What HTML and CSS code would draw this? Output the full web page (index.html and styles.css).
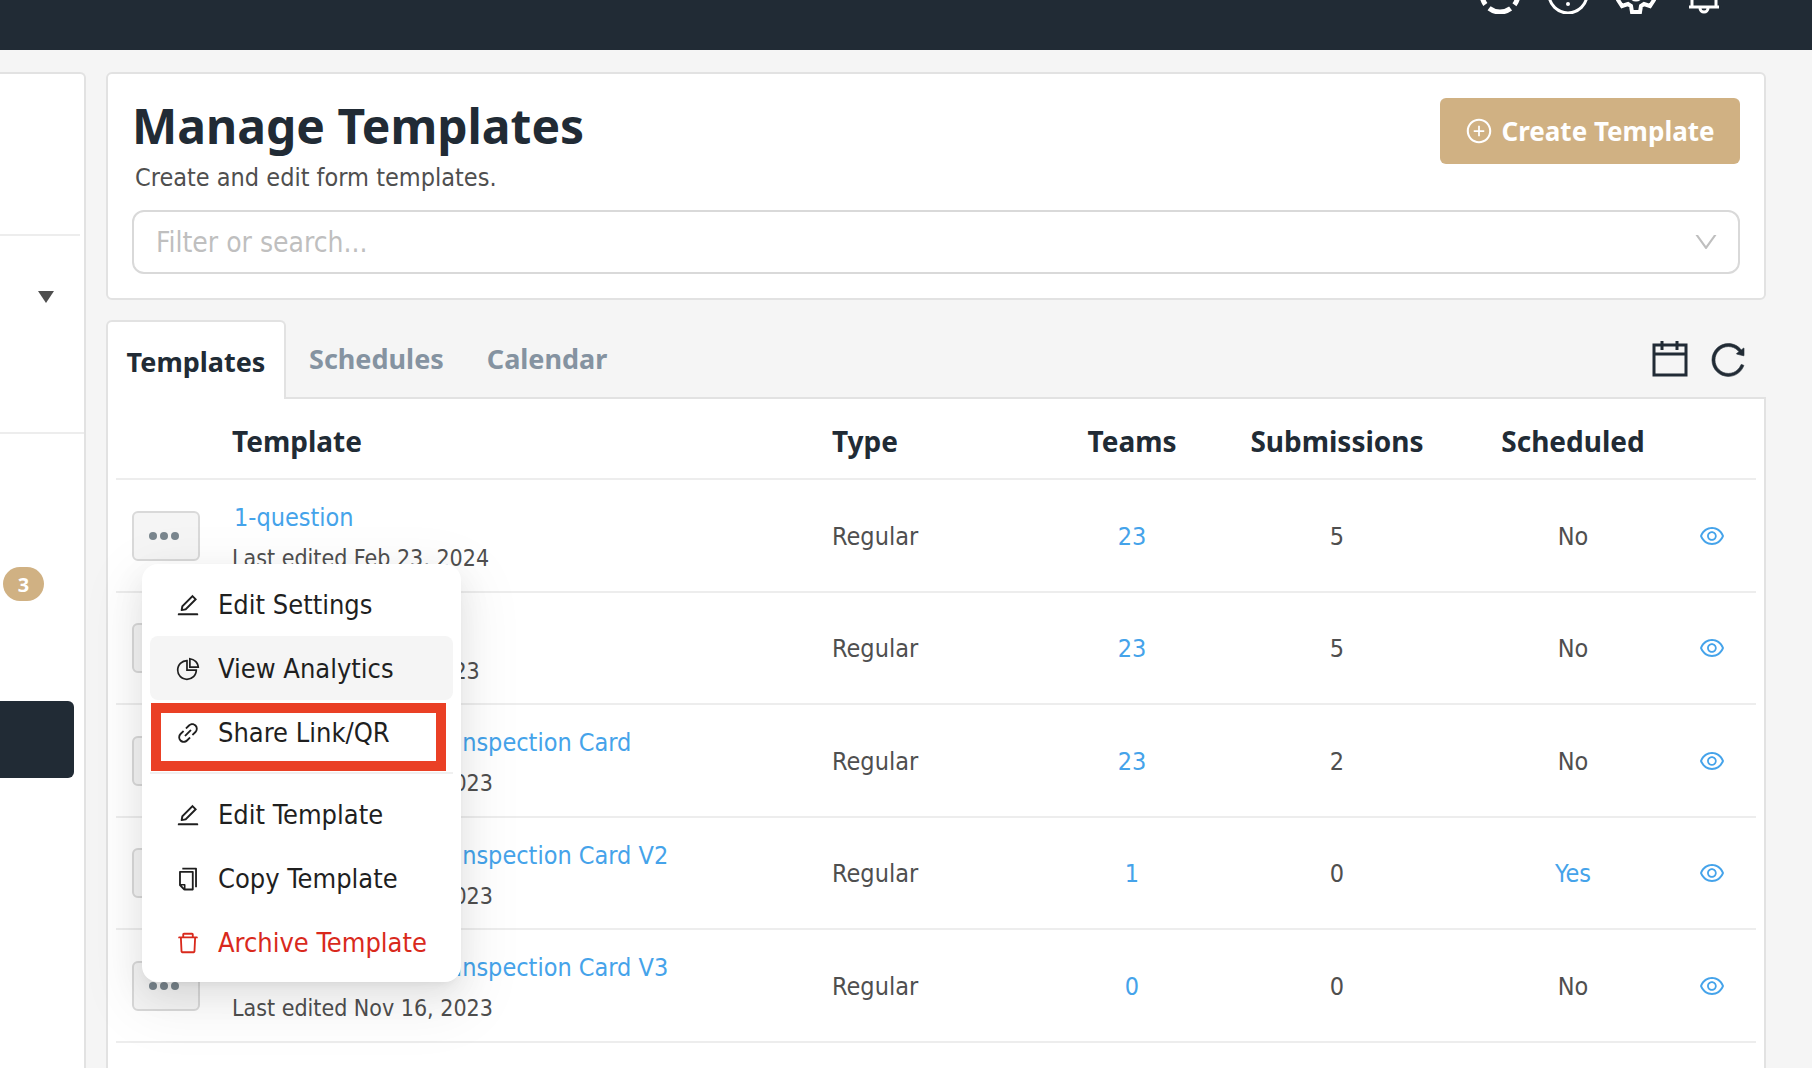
FILE: index.html
```html
<!DOCTYPE html>
<html lang="en">

<head>
    <meta charset="UTF-8">
    <title>Manage Templates</title>
    <link rel="stylesheet" href="styles.css">
</head>

<body>
    <!-- icon sprite -->
    <svg class="sprite" aria-hidden="true">
        <symbol id="icon-plus" viewBox="0 0 1024 1024">
            <path d="M696 480H544V328c0-4.400-3.600-8-8-8h-48c-4.400 0-8 3.600-8 8v152H328c-4.400 0-8 3.600-8 8v48c0 4.400 3.600 8 8 8h152v152c0 4.400 3.600 8 8 8h48c4.400 0 8-3.600 8-8V544h152c4.400 0 8-3.600 8-8v-48c0-4.400-3.600-8-8-8z" />
            <path d="M512 64C264.600 64 64 264.600 64 512s200.600 448 448 448 448-200.600 448-448S759.400 64 512 64zm0 820c-205.400 0-372-166.600-372-372s166.600-372 372-372 372 166.600 372 372-166.600 372-372 372z" />
        </symbol>
        <symbol id="icon-edit" viewBox="0 0 1024 1024">
            <path d="M257.700 752c2 0 4-.2 6-.5L431.900 722c2-.4 3.900-1.300 5.300-2.800l423.900-423.900a9.960 9.960 0 0 0 0-14.100L694.900 114.900c-1.900-1.900-4.400-2.900-7.100-2.900s-5.200 1-7.100 2.900L256.800 538.800c-1.500 1.500-2.400 3.300-2.800 5.300l-29.500 168.200a33.500 33.500 0 0 0 9.400 29.800c6.600 6.400 14.900 9.900 23.800 9.900zm67.400-174.400L687.800 215l73.300 73.300-362.700 362.600-88.900 15.700 15.600-89zM880 836H144c-17.700 0-32 14.300-32 32v36c0 4.400 3.600 8 8 8h784c4.400 0 8-3.600 8-8v-36c0-17.700-14.300-32-32-32z" />
        </symbol>
        <symbol id="icon-chart" viewBox="0 0 1024 1024">
            <path d="M864 518H506V160c0-4.400-3.600-8-8-8h-26a398.460 398.460 0 0 0-282.800 117.100 398.190 398.190 0 0 0-85.700 127.100A397.610 397.610 0 0 0 72 552a398.460 398.460 0 0 0 117.100 282.800c36.700 36.700 79.500 65.600 127.100 85.700A397.610 397.610 0 0 0 472 952a398.460 398.460 0 0 0 282.800-117.100c36.700-36.700 65.600-79.500 85.700-127.100A397.610 397.610 0 0 0 872 552v-26c0-4.400-3.600-8-8-8zM705.700 787.800A331.590 331.590 0 0 1 470.400 884c-88.100-.4-170.900-34.900-233.200-97.200C174.500 724.100 140 640.700 140 552c0-88.700 34.500-172.100 97.200-234.800 54.600-54.600 124.900-87.900 200.800-95.500V586h364.300c-7.700 76.300-41.300 147-96.600 201.800zM952 462.400l-2.600-28.200c-8.500-92.100-49.400-179-115.200-244.600A399.400 399.400 0 0 0 589 74.600L560.700 72c-4.700-.4-8.700 3.200-8.700 7.900V464c0 4.400 3.600 8 8 8l384-1c4.700 0 8.400-4 8-8.600zm-332.200-58.200V147.600a332.240 332.240 0 0 1 166.400 89.800c45.700 45.600 77 103.600 90 166.100l-256.400.7z" />
        </symbol>
        <symbol id="icon-link" viewBox="0 0 1024 1024">
            <path d="M574 665.400a8.030 8.030 0 0 0-11.300 0L446.500 781.600c-53.800 53.800-144.600 59.500-204 0-59.500-59.500-53.800-150.200 0-204l116.200-116.200c3.100-3.100 3.100-8.200 0-11.300l-39.800-39.800a8.030 8.030 0 0 0-11.300 0L191.400 526.500c-84.600 84.600-84.600 221.500 0 306s221.500 84.600 306 0l116.200-116.200c3.100-3.100 3.100-8.200 0-11.300L574 665.400zm258.600-474c-84.600-84.600-221.500-84.600-306 0L410.300 307.600a8.030 8.030 0 0 0 0 11.300l39.700 39.700c3.100 3.100 8.200 3.100 11.300 0l116.200-116.200c53.800-53.800 144.600-59.500 204 0 59.500 59.500 53.800 150.200 0 204L665.300 562.600a8.030 8.030 0 0 0 0 11.300l39.800 39.800c3.100 3.100 8.200 3.100 11.300 0l116.200-116.200c84.500-84.600 84.500-221.500 0-306.100zM610.100 372.300a8.030 8.030 0 0 0-11.300 0L372.300 598.700a8.030 8.030 0 0 0 0 11.300l39.600 39.600c3.100 3.100 8.200 3.100 11.300 0l226.400-226.400c3.100-3.100 3.100-8.200 0-11.300l-39.500-39.600z" />
        </symbol>
        <symbol id="icon-copy" viewBox="0 0 1024 1024">
            <path d="M832 64H296c-4.400 0-8 3.600-8 8v56c0 4.400 3.600 8 8 8h496v688c0 4.400 3.600 8 8 8h56c4.400 0 8-3.600 8-8V96c0-17.700-14.300-32-32-32zM704 192H192c-17.700 0-32 14.300-32 32v530.700c0 8.500 3.400 16.600 9.400 22.600l173.300 173.300c2.200 2.200 4.700 4 7.400 5.500v1.900h4.200c3.500 1.300 7.200 2 11 2H704c17.700 0 32-14.300 32-32V224c0-17.700-14.300-32-32-32zM350 856.200L263.900 770H350v86.200zM664 888H414V746c0-22.100-17.900-40-40-40H232V264h432v624z" />
        </symbol>
        <symbol id="icon-trash" viewBox="0 0 1024 1024">
            <path d="M360 184h-8c4.400 0 8-3.600 8-8v8h304v-8c0 4.400 3.600 8 8 8h-8v72h72v-80c0-35.300-28.700-64-64-64H352c-35.300 0-64 28.700-64 64v80h72v-72zm504 72H160c-17.700 0-32 14.300-32 32v32c0 4.400 3.600 8 8 8h60.400l24.700 523c1.600 34.100 29.800 61 63.900 61h454c34.200 0 62.300-26.800 63.900-61l24.700-523H888c4.400 0 8-3.600 8-8v-32c0-17.700-14.300-32-32-32zM731.300 840H292.700l-24.200-512h487l-24.200 512z" />
        </symbol>
        <symbol id="icon-eye" viewBox="0 0 1024 1024">
            <path d="M942.200 486.200C847.400 286.500 704.100 186 512 186c-192.200 0-335.400 100.500-430.200 300.300a60.300 60.300 0 0 0 0 51.500C176.600 737.500 319.900 838 512 838c192.200 0 335.400-100.500 430.200-300.300 7.700-16.200 7.700-35 0-51.500zM512 766c-161.300 0-279.400-81.800-362.700-254C232.600 339.800 350.700 258 512 258c161.300 0 279.400 81.800 362.700 254C791.500 684.200 673.400 766 512 766zm-4-430c-97.200 0-176 78.800-176 176s78.800 176 176 176 176-78.800 176-176-78.800-176-176-176zm0 288c-61.900 0-112-50.100-112-112s50.100-112 112-112 112 50.100 112 112-50.100 112-112 112z" />
        </symbol>
        <symbol id="icon-down" viewBox="0 0 1024 1024">
            <path d="M884 256h-75c-5.100 0-9.900 2.500-12.900 6.600L512 654.200 227.900 262.600c-3-4.100-7.800-6.600-12.900-6.600h-75c-6.500 0-10.300 7.400-6.500 12.700l352.600 486.100c12.800 17.600 39 17.600 51.700 0l352.600-486.100c3.900-5.300.1-12.700-6.400-12.700z" />
        </symbol>
        <symbol id="icon-reload" viewBox="0 0 1024 1024">
            <path stroke="currentColor" stroke-width="16" d="M909.100 209.300l-56.400 44.100C775.800 155.100 656.200 92 521.900 92 290 92 102.300 279.500 102 511.500 101.700 743.700 289.800 932 521.900 932c181.300 0 335.800-115 394.600-276.100 1.500-4.200-.7-8.900-4.900-10.300l-56.700-19.500a8 8 0 0 0-10.100 4.800c-1.800 5-3.800 10-5.900 14.900-17.300 41-42.100 77.800-73.700 109.400A344.770 344.770 0 0 1 655.900 829c-42.300 17.900-87.400 27-133.800 27-46.500 0-91.500-9.100-133.800-27A341.500 341.500 0 0 1 279 755.200a342.160 342.160 0 0 1-73.700-109.400c-17.900-42.400-27-87.400-27-133.900s9.100-91.500 27-133.900c17.300-41 42.100-77.800 73.700-109.400 31.600-31.600 68.400-56.400 109.300-73.800 42.300-17.900 87.400-27 133.800-27 46.500 0 91.500 9.100 133.800 27a341.500 341.500 0 0 1 109.300 73.800c9.900 9.900 19.200 20.400 27.800 31.400l-60.200 47a8 8 0 0 0 3 14.100l175.600 43c5 1.200 9.900-2.600 9.900-7.700l.8-180.900c-.1-6.600-7.800-10.300-13-6.200z" />
        </symbol>
        <symbol id="icon-dots" viewBox="0 0 32 32">
            <circle cx="5" cy="16" r="4" /><circle cx="16" cy="16" r="4" /><circle cx="27" cy="16" r="4" />
        </symbol>
    </svg>

    <header class="topbar">
        <button type="button" class="icon-btn" aria-label="Status">
            <svg class="icon-top" viewBox="0 0 40 40"><circle cx="20" cy="20" r="18" fill="none" stroke="currentColor" stroke-width="5" stroke-dasharray="23 5.270" stroke-dashoffset="-16.800" /></svg>
        </button>
        <button type="button" class="icon-btn" aria-label="Help">
            <svg class="icon-top" viewBox="0 0 40 40"><circle cx="20" cy="20" r="19" fill="none" stroke="currentColor" stroke-width="3" /><circle cx="20" cy="30" r="2" fill="currentColor" /><path d="M15 13a5 5 0 1 1 7 5q-2 1-2 4" fill="none" stroke="currentColor" stroke-width="3" /></svg>
        </button>
        <button type="button" class="icon-btn" aria-label="Settings">
            <svg class="icon-top" viewBox="0 0 40 40"><path d="M16 2h8l1 6 3 2 6-2 4 7-5 4v2l5 5-4 6-6-2-3 2-1 6h-8l-1-6-3-2-6 2-4-6 5-5v-2l-5-4 4-7 6 2 3-2z" fill="none" stroke="currentColor" stroke-width="4" /><circle cx="20" cy="20" r="6" fill="none" stroke="currentColor" stroke-width="3" /></svg>
        </button>
        <button type="button" class="icon-btn" aria-label="Notifications">
            <svg class="icon-top" viewBox="0 0 40 40"><path d="M5 33h30M8 33V16a12 12 0 0 1 24 0v17M16 34a4 4 0 0 0 8 0" fill="none" stroke="currentColor" stroke-width="3" /></svg>
        </button>
    </header>

    <div class="layout">
        <aside class="sidebar">
            <div class="side-logo"></div>
            <div class="side-group"><span class="caret"></span></div>
            <nav class="side-nav">
                <span class="badge">3</span>
                <a href="#" class="side-active" aria-label="Templates"></a>
            </nav>
        </aside>

        <main class="content">
            <section class="card">
                <div class="card-head">
                    <div>
                        <h1>Manage Templates</h1>
                        <p class="subtitle">Create and edit form templates.</p>
                    </div>
                    <button type="button" class="create-btn"><svg class="icon-md"><use href="#icon-plus" /></svg>Create Template</button>
                </div>
                <div class="search">
                    <input type="text" placeholder="Filter or search..." aria-label="Filter or search">
                    <svg class="icon-md"><use href="#icon-down" /></svg>
                </div>
            </section>

            <div class="tabs">
                <button type="button" class="tab active">Templates</button>
                <button type="button" class="tab">Schedules</button>
                <button type="button" class="tab">Calendar</button>
                <div class="tab-tools">
                    <button type="button" class="icon-btn" aria-label="Pick dates">
                        <svg class="icon-lg" viewBox="0 0 40 40"><path d="M4 5h32v30H4zM4 14h32M12 1v9M27 1v9" fill="none" stroke="currentColor" stroke-width="3" /></svg>
                    </button>
                    <button type="button" class="icon-btn" aria-label="Reload">
                        <svg class="icon-lg"><use href="#icon-reload" /></svg>
                    </button>
                </div>
            </div>

            <section class="panel">
                <table>
                    <colgroup>
                        <col class="col-menu">
                        <col>
                        <col class="col-type">
                        <col class="col-teams">
                        <col class="col-subs">
                        <col class="col-sched">
                        <col class="col-view">
                    </colgroup>
                    <thead>
                        <tr>
                            <th></th>
                            <th class="left">Template</th>
                            <th class="left">Type</th>
                            <th>Teams</th>
                            <th>Submissions</th>
                            <th>Scheduled</th>
                            <th></th>
                        </tr>
                    </thead>
                    <tbody>
                        <tr>
                            <td class="actions">
                                <div class="dropdown">
                                    <button type="button" class="more-btn" aria-label="More actions"><svg class="icon-dots"><use href="#icon-dots" /></svg></button>
                                    <div class="menu">
                                        <button type="button" class="menu-item"><svg class="icon-sm"><use href="#icon-edit" /></svg>Edit Settings</button>
                                        <button type="button" class="menu-item hovered"><svg class="icon-sm"><use href="#icon-chart" /></svg>View Analytics</button>
                                        <button type="button" class="menu-item marked"><svg class="icon-sm"><use href="#icon-link" /></svg>Share Link/QR</button>
                                        <hr>
                                        <button type="button" class="menu-item"><svg class="icon-sm"><use href="#icon-edit" /></svg>Edit Template</button>
                                        <button type="button" class="menu-item"><svg class="icon-sm"><use href="#icon-copy" /></svg>Copy Template</button>
                                        <button type="button" class="menu-item danger"><svg class="icon-sm"><use href="#icon-trash" /></svg>Archive Template</button>
                                    </div>
                                </div>
                            </td>
                            <td class="left title"><a href="#" class="name">1-question</a><div class="edited">Last edited Feb 23, 2024</div></td>
                            <td class="left">Regular</td>
                            <td><a href="#">23</a></td>
                            <td>5</td>
                            <td>No</td>
                            <td class="actions"><a href="#" class="view" aria-label="View"><svg class="icon-md"><use href="#icon-eye" /></svg></a></td>
                        </tr>
                        <tr>
                            <td class="actions"><button type="button" class="more-btn" aria-label="More actions"><svg class="icon-dots"><use href="#icon-dots" /></svg></button></td>
                            <td class="left title"><a href="#" class="name">2-question</a><div class="edited">Last edited Nov 6, 2023</div></td>
                            <td class="left">Regular</td>
                            <td><a href="#">23</a></td>
                            <td>5</td>
                            <td>No</td>
                            <td class="actions"><a href="#" class="view" aria-label="View"><svg class="icon-md"><use href="#icon-eye" /></svg></a></td>
                        </tr>
                        <tr>
                            <td class="actions"><button type="button" class="more-btn" aria-label="More actions"><svg class="icon-dots"><use href="#icon-dots" /></svg></button></td>
                            <td class="left title"><a href="#" class="name">Outdoor Shop Area Inspection Card</a><div class="edited">Last edited Nov 16, 2023</div></td>
                            <td class="left">Regular</td>
                            <td><a href="#">23</a></td>
                            <td>2</td>
                            <td>No</td>
                            <td class="actions"><a href="#" class="view" aria-label="View"><svg class="icon-md"><use href="#icon-eye" /></svg></a></td>
                        </tr>
                        <tr>
                            <td class="actions"><button type="button" class="more-btn" aria-label="More actions"><svg class="icon-dots"><use href="#icon-dots" /></svg></button></td>
                            <td class="left title"><a href="#" class="name">Outdoor Shop Area Inspection Card V2</a><div class="edited">Last edited Nov 15, 2023</div></td>
                            <td class="left">Regular</td>
                            <td><a href="#">1</a></td>
                            <td>0</td>
                            <td><a href="#">Yes</a></td>
                            <td class="actions"><a href="#" class="view" aria-label="View"><svg class="icon-md"><use href="#icon-eye" /></svg></a></td>
                        </tr>
                        <tr>
                            <td class="actions"><button type="button" class="more-btn" aria-label="More actions"><svg class="icon-dots"><use href="#icon-dots" /></svg></button></td>
                            <td class="left title"><a href="#" class="name">Outdoor Shop Area Inspection Card V3</a><div class="edited">Last edited Nov 16, 2023</div></td>
                            <td class="left">Regular</td>
                            <td><a href="#">0</a></td>
                            <td>0</td>
                            <td>No</td>
                            <td class="actions"><a href="#" class="view" aria-label="View"><svg class="icon-md"><use href="#icon-eye" /></svg></a></td>
                        </tr>
                    </tbody>
                </table>
            </section>
        </main>
    </div>
</body>

</html>
```
FILE: styles.css
```css
* {
    box-sizing: border-box;
}

body {
    margin: 0;
    height: 100vh;
    display: flex;
    flex-direction: column;
    overflow: hidden;
    background-color: #f5f5f5;
    color: #4f4f4f;
    font-family: 'DejaVu Sans Condensed', 'DejaVu Sans', sans-serif;
    font-size: 25px;
    line-height: 40px;
}

button {
    font: inherit;
    color: inherit;
    border: none;
    background: none;
    padding: 0;
    cursor: pointer;
}

a {
    color: #45a3ea;
    text-decoration: none;
}

svg {
    display: block;
    flex-shrink: 0;
    fill: currentColor;
}

.sprite {
    position: absolute;
    width: 0;
    height: 0;
}

.icon-sm {
    width: 26px;
    height: 26px;
}

.icon-md {
    width: 28px;
    height: 28px;
}

.icon-dots {
    width: 32px;
    height: 32px;
}

.icon-lg,
.icon-top {
    width: 40px;
    height: 40px;
}

/* top bar */
.topbar {
    flex-shrink: 0;
    height: 50px;
    display: flex;
    justify-content: flex-end;
    align-items: flex-start;
    gap: 28px;
    padding-right: 88px;
    overflow: hidden;
    background-color: #212b35;
    color: white;
}

.topbar .icon-btn {
    margin-top: -26px;
}

/* layout */
.layout {
    flex: 1;
    min-height: 0;
    display: flex;
    gap: 20px;
    padding: 22px 46px 0 0;
}

.content {
    flex: 1;
    min-width: 0;
    display: flex;
    flex-direction: column;
}

/* sidebar */
.sidebar {
    width: 86px;
    flex-shrink: 0;
    background-color: white;
    border: 2px solid #e2e2e2;
    border-width: 2px 2px 0 0;
    border-top-right-radius: 6px;
}

.side-logo {
    height: 162px;
    margin-right: 4px;
    border-bottom: 2px solid #ededed;
}

.side-group {
    height: 198px;
    padding: 55px 30px 0 0;
    border-bottom: 2px solid #ededed;
}

.caret {
    display: block;
    margin-left: auto;
    width: 16px;
    height: 12px;
    background-color: #4f4f4f;
    clip-path: polygon(0 0, 100% 0, 50% 100%);
}

.side-nav {
    padding: 133px 10px 0 0;
}

.badge {
    display: block;
    width: 41px;
    height: 34px;
    margin-left: 3px;
    border-radius: 17px;
    background-color: #d0b183;
    color: white;
    font: bold 20px/35px 'Noto Sans', sans-serif;
    text-align: center;
}

.side-active {
    display: block;
    height: 77px;
    margin-top: 100px;
    border-radius: 0 6px 6px 0;
    background-color: #212b35;
}

/* header card */
.card {
    height: 228px;
    padding: 24px;
    background-color: white;
    border: 2px solid #e2e2e2;
    border-radius: 6px;
}

.card-head {
    display: flex;
    justify-content: space-between;
    align-items: flex-start;
    height: 112px;
}

h1 {
    margin: 0;
    color: #212b35;
    font: bold 48px/56px 'Noto Sans', sans-serif;
}

.subtitle {
    margin: 4px 0 0 3px;
}

.create-btn {
    display: flex;
    align-items: center;
    justify-content: center;
    gap: 8px;
    width: 300px;
    height: 66px;
    border-radius: 6px;
    background-color: #d0b183;
    color: white;
    font: bold 26px/40px 'Noto Sans', sans-serif;
}

.search {
    display: flex;
    align-items: center;
    height: 64px;
    padding: 0 18px 0 22px;
    border: 2px solid #d9d9d9;
    border-radius: 12px;
    color: #bfbfbf;
}

.search input {
    flex: 1;
    min-width: 0;
    padding: 2px 0 0;
    border: none;
    outline: none;
    background: none;
    font: inherit;
    font-size: 28px;
}

.search input::placeholder {
    color: #bfbfbf;
}

/* tabs */
.tabs {
    display: flex;
    height: 77px;
    margin-top: 20px;
}

.tab {
    padding: 0;
    margin-left: 43px;
    color: #8593a1;
    font: bold 27px/40px 'Noto Sans', sans-serif;
}

.tab.active {
    width: 180px;
    height: 79px;
    margin: 0 -20px 0 0;
    padding: 2px 0 0;
    position: relative;
    border: 2px solid #e2e2e2;
    border-bottom: none;
    border-radius: 6px 6px 0 0;
    background-color: white;
    color: #212b35;
}

.tab-tools {
    display: flex;
    align-items: center;
    gap: 18px;
    margin-left: auto;
    padding: 2px 18px 0 0;
    color: #212b35;
}

/* table */
.panel {
    flex: 1;
    padding: 0 8px;
    background-color: white;
    border: 2px solid #e2e2e2;
    border-bottom: none;
}

table {
    width: 100%;
    table-layout: fixed;
    border-collapse: separate;
    border-spacing: 0;
}

.col-menu { width: 100px; }
.col-type { width: 240px; }
.col-teams { width: 152px; }
.col-subs { width: 258px; }
.col-sched { width: 214px; }
.col-view { width: 76px; }

th,
td {
    height: 112px;
    padding: 2px 0 0;
    border-bottom: 2px solid #ededed;
    text-align: center;
}

tbody tr:nth-child(odd) td {
    height: 113px;
}

th {
    height: 81px;
    padding-top: 4px;
    color: #212b35;
    font: bold 28px/40px 'Noto Sans', sans-serif;
}

.left {
    padding-left: 16px;
    text-align: left;
}

.title {
    padding-top: 5px;
}

.actions {
    padding-top: 0;
}

.name {
    display: block;
    margin-left: 2px;
}

.edited {
    font-size: 23px;
}

.view {
    display: block;
    width: 28px;
    margin-left: 18px;
}

.more-btn {
    display: flex;
    align-items: center;
    justify-content: center;
    width: 68px;
    height: 50px;
    margin-left: 16px;
    padding-right: 4px;
    border: 2px solid #d9d9d9;
    border-radius: 6px;
    background-color: #f5f5f5;
    color: #7a868e;
}

/* row menu */
.dropdown {
    position: relative;
}

.menu {
    position: absolute;
    top: 53px;
    left: 26px;
    z-index: 10;
    width: 319px;
    padding: 8px;
    border-radius: 16px;
    background-color: white;
    box-shadow: 0 12px 32px rgba(0, 0, 0, 0.08), 0 6px 12px -8px rgba(0, 0, 0, 0.12), 0 18px 56px 16px rgba(0, 0, 0, 0.05);
}

.menu-item {
    display: flex;
    align-items: center;
    gap: 17px;
    width: 100%;
    height: 64px;
    padding: 2px 0 0 25px;
    border-radius: 8px;
    color: #1f1f1f;
    font-size: 27px;
    white-space: nowrap;
}

.menu-item.hovered {
    background-color: #f5f5f5;
}

.menu-item.danger {
    color: #d9291c;
}

.menu-item.marked {
    position: relative;
}

.menu-item.marked::after {
    content: '';
    position: absolute;
    inset: 3px 7px -7px 1px;
    border: 10px solid #ea4025;
}

.menu hr {
    height: 2px;
    margin: 8px 0;
    border: none;
    background-color: #f0f0f0;
}
```
